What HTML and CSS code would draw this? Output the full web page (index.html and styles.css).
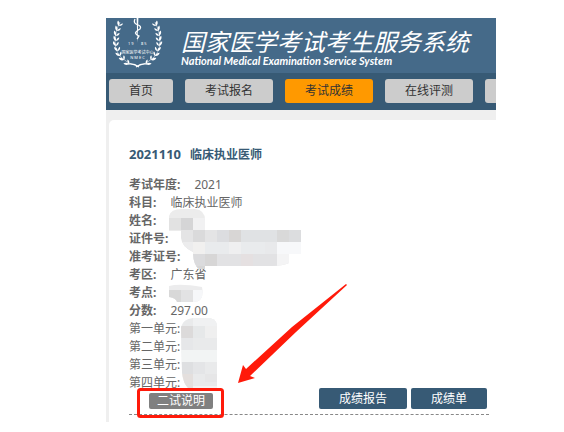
FILE: index.html
```html
<!DOCTYPE html>
<html lang="zh-CN">
<head>
    <meta charset="UTF-8">
    <meta name="viewport" content="width=device-width, initial-scale=1.0">
    <title>国家医学考试考生服务系统</title>
    <link rel="stylesheet" href="styles.css">
</head>
<body>
    <div class="page">
        <header class="header">
            <svg class="logo" width="50" height="50" viewBox="0 0 50 50" aria-hidden="true">
                <defs>
                    <path id="leaf" d="M0 0C-2.6 -1 -3.2 -3 -2.6 -5C-.8 -4 .2 -2.4 0 0C.4 -2 1.4 -3.2 3 -3.6C3.2 -1.8 2 -.4 0 0Z"/>
                    <g id="branch">
                        <path d="M7 4C1 16 -1 31 9 40Q15 46 24 48" fill="none" stroke="#fff" stroke-width=".5"/>
                        <use href="#leaf" transform="translate(6 8) rotate(18)"/>
                        <use href="#leaf" transform="translate(4 13) rotate(16)"/>
                        <use href="#leaf" transform="translate(3 18) rotate(10)"/>
                        <use href="#leaf" transform="translate(3 23) rotate(4)"/>
                        <use href="#leaf" transform="translate(3 28) rotate(-6)"/>
                        <use href="#leaf" transform="translate(5 33) rotate(-16)"/>
                        <use href="#leaf" transform="translate(7 38) rotate(-28)"/>
                        <use href="#leaf" transform="translate(11 42) rotate(-42)"/>
                        <use href="#leaf" transform="translate(16 46) rotate(-58)"/>
                        <path d="M15 46Q21 45 26 49" fill="none" stroke="#fff" stroke-width="1.2"/>
                    </g>
                </defs>
                <g fill="#fff">
                    <use href="#branch"/>
                    <use href="#branch" transform="translate(49 0) scale(-1 1)"/>
                    <path d="M23.6 0H25.4L24.5 25Z"/>
                    <path d="M22 1Q20 5 24 6.5Q29 8 27 11Q23 13 22.5 15Q23 17 26 18Q25 20 24 21" fill="none" stroke="#fff" stroke-width="1.3"/>
                    <text class="logo-year" x="15" y="27">1 9</text>
                    <text class="logo-year" x="28" y="27">8 5</text>
                    <text class="logo-name" x="24.5" y="36">国家医学考试中心</text>
                    <text class="logo-name" x="24.5" y="41">N M E C</text>
                </g>
            </svg>
            <div class="brand">
                <h1 class="brand-title">国家医学考试考生服务系统</h1>
                <p class="brand-subtitle">National Medical Examination Service System</p>
            </div>
        </header>

        <nav class="nav">
            <a class="nav-item" href="#">首页</a>
            <a class="nav-item" href="#">考试报名</a>
            <a class="nav-item active" href="#">考试成绩</a>
            <a class="nav-item" href="#">在线评测</a>
            <a class="nav-item" href="#" aria-label="更多"></a>
        </nav>

        <main class="main">
            <section class="card">
                <h2 class="exam-title"><span class="exam-code">2021110</span>临床执业医师</h2>
                <dl class="result">
                    <div class="row"><dt>考试年度:</dt><dd>2021</dd></div>
                    <div class="row"><dt>科目:</dt><dd>临床执业医师</dd></div>
                    <div class="row"><dt>姓名:</dt><dd></dd></div>
                    <div class="row"><dt>证件号:</dt><dd></dd></div>
                    <div class="row"><dt>准考证号:</dt><dd></dd></div>
                    <div class="row"><dt>考区:</dt><dd>广东省</dd></div>
                    <div class="row"><dt>考点:</dt><dd></dd></div>
                    <div class="row"><dt>分数:</dt><dd>297.00</dd></div>
                    <div class="row unit"><dt>第一单元:</dt><dd></dd></div>
                    <div class="row unit"><dt>第二单元:</dt><dd></dd></div>
                    <div class="row unit"><dt>第三单元:</dt><dd></dd></div>
                    <div class="row unit"><dt>第四单元:</dt><dd></dd></div>
                </dl>
                <div class="actions">
                    <button class="btn-note" type="button">二试说明</button>
                    <button class="btn" type="button">成绩报告</button>
                    <button class="btn" type="button">成绩单</button>
                </div>

                <!-- masked personal data, highlight box and arrow -->
                <svg class="marks" width="260" height="310" viewBox="109 120 260 310" aria-hidden="true">
                    <defs>
                        <clipPath id="mask-name"><path d="M169 216Q171 209 181 209H195Q205 210 205 220V231H169Z"/></clipPath>
                        <clipPath id="mask-id"><path d="M181 230H301V254H289V263Q283 266 270 266H205V269H199Q193 265 193 252Q182 247 181 238Z"/></clipPath>
                        <clipPath id="mask-site"><path d="M169 286Q180 283 202 287Q205 302 193 302H177Q176 298 169 297Z"/></clipPath>
                        <clipPath id="mask-score"><path d="M181 327Q183 319 193 318H210Q217 320 217 326V388H188Q183 383 182 372Z"/></clipPath>
                    </defs>
                    <g clip-path="url(#mask-name)">
                        <rect x="169" y="206" width="36" height="26" fill="#ececec"/>
                        <rect x="169" y="218" width="12" height="12" fill="#e2e2e2"/>
                        <rect x="181" y="218" width="12" height="12" fill="#d5d5d6"/>
                        <rect x="193" y="218" width="12" height="12" fill="#f1f1f2"/>
                    </g>
                    <g clip-path="url(#mask-id)">
                        <rect x="181" y="230" width="120" height="39" fill="#e4e4e5"/>
                        <rect x="193" y="230" width="12" height="12" fill="#dadadb"/>
                        <rect x="217" y="230" width="12" height="12" fill="#dcdde0"/>
                        <rect x="229" y="230" width="12" height="12" fill="#d8d6d5"/>
                        <rect x="241" y="230" width="36" height="12" fill="#e0e2e4"/>
                        <rect x="277" y="230" width="12" height="12" fill="#d9d9d9"/>
                        <rect x="289" y="230" width="12" height="12" fill="#dcdddf"/>
                        <rect x="181" y="242" width="12" height="12" fill="#ececed"/>
                        <rect x="193" y="242" width="12" height="12" fill="#f1f0ef"/>
                        <rect x="205" y="242" width="60" height="12" fill="#e9ebed"/>
                        <rect x="229" y="242" width="12" height="12" fill="#efeff0"/>
                        <rect x="265" y="242" width="12" height="12" fill="#e8e9eb"/>
                        <rect x="277" y="242" width="24" height="12" fill="#f7f8fa"/>
                        <rect x="193" y="254" width="12" height="12" fill="#dbdbdd"/>
                        <rect x="205" y="254" width="12" height="12" fill="#d7d6d6"/>
                        <rect x="217" y="254" width="60" height="12" fill="#e2e2e4"/>
                        <rect x="241" y="254" width="12" height="12" fill="#e5e0e1"/>
                        <rect x="277" y="254" width="12" height="12" fill="#f4f4f5"/>
                        <rect x="193" y="266" width="12" height="3" fill="#d6d6d6"/>
                    </g>
                    <g clip-path="url(#mask-site)">
                        <rect x="169" y="284" width="36" height="18" fill="#ececed"/>
                        <rect x="169" y="290" width="12" height="12" fill="#d8d8d8"/>
                        <rect x="181" y="290" width="12" height="12" fill="#e2e2e3"/>
                        <rect x="193" y="290" width="12" height="12" fill="#f6f7f9"/>
                    </g>
                    <g clip-path="url(#mask-score)">
                        <rect x="181" y="318" width="36" height="70" fill="#e9eaeb"/>
                        <rect x="193" y="318" width="24" height="8" fill="#f0f1f2"/>
                        <rect x="181" y="326" width="12" height="12" fill="#dcdada"/>
                        <rect x="193" y="326" width="12" height="12" fill="#e6e8e9"/>
                        <rect x="205" y="326" width="12" height="12" fill="#efefef"/>
                        <rect x="181" y="338" width="12" height="12" fill="#e6e7e9"/>
                        <rect x="181" y="350" width="36" height="12" fill="#f2f4f4"/>
                        <rect x="181" y="362" width="12" height="12" fill="#dedfe1"/>
                        <rect x="193" y="362" width="12" height="12" fill="#e4e5e7"/>
                        <rect x="181" y="374" width="12" height="14" fill="#e4dfdd"/>
                        <rect x="205" y="374" width="12" height="8" fill="#e6e6e7"/>
                        <rect x="193" y="386" width="24" height="2" fill="#f3f3f3"/>
                    </g>
                    <rect x="138.5" y="389.5" width="84" height="27" rx="2" fill="none" stroke="#ff1a0a" stroke-width="3"/>
                    <path d="M346 284L292 327L246 369L243 365L238 383L255 378L250 376L296 332L347 285Z" fill="#ff1a0a"/>
                </svg>
            </section>
        </main>
    </div>
</body>
</html>
```

FILE: styles.css
```css
* {
    box-sizing: border-box;
}

body {
    margin: 0;
    padding: 18px 68px 11px 106px;
    background: #fff;
    font-family: "Noto Sans", "Noto Sans CJK SC", sans-serif;
    font-size: 12px;
    line-height: 18px;
    color: #666;
}

h1, h2, p, dl, dd {
    margin: 0;
}

.header {
    display: flex;
    gap: 18px;
    height: 55px;
    padding-left: 7px;
    background: #456a89;
    color: #fff;
    white-space: nowrap;
    overflow: hidden;
}

.logo {
    flex: none;
}

.logo-year {
    font-size: 4px;
}

.logo-name {
    font-size: 4px;
    text-anchor: middle;
}

.brand {
    padding-top: 9px;
}

.brand-title {
    font-family: "Noto Sans CJK SC", sans-serif;
    font-size: 24px;
    line-height: 28px;
    font-weight: 400;
    font-style: italic;
}

.brand-subtitle {
    font-family: Lato, sans-serif;
    font-size: 11px;
    line-height: 12px;
    font-weight: 700;
    font-style: italic;
}

.nav {
    display: flex;
    gap: 12px;
    padding: 6px 0 7px 3px;
    background: #375a75;
    overflow: hidden;
}

.nav-item {
    flex: none;
    height: 24px;
    padding: 0 20px;
    border-radius: 3px;
    background: #ccc;
    color: #333;
    line-height: 24px;
    text-decoration: none;
}

.nav-item.active {
    background: #ff9900;
}

.main {
    padding: 10px 0 0 3px;
    background: #efefef;
}

.card {
    position: relative;
    padding: 23px 7px 7px 20px;
    border-top-left-radius: 5px;
    background: #fff;
}

.exam-title {
    margin-bottom: 10px;
    font-size: 12px;
    line-height: 22px;
    font-weight: 700;
    color: #375a75;
}

.exam-code {
    margin-right: 9px;
    font-size: 13px;
}

.row {
    display: flex;
    gap: 14px;
    height: 18px;
}

.row dt {
    font-weight: 700;
}

.row.unit dt {
    font-weight: 400;
}

.actions {
    display: flex;
    align-items: flex-end;
    gap: 4px;
    margin-top: -4px;
    padding: 0 2px 5px 20px;
    border-bottom: 1px dashed #888;
}

button {
    padding: 0 20px;
    border: none;
    border-radius: 2px;
    color: #fff;
    font-family: inherit;
    font-size: 12px;
    cursor: pointer;
}

.btn {
    height: 21px;
    background: #375a75;
    line-height: 21px;
}

.btn-note {
    height: 16px;
    margin-right: auto;
    padding: 0 8px;
    background: #808080;
    line-height: 16px;
}

.marks {
    position: absolute;
    top: 0;
    left: 0;
    pointer-events: none;
}
```
